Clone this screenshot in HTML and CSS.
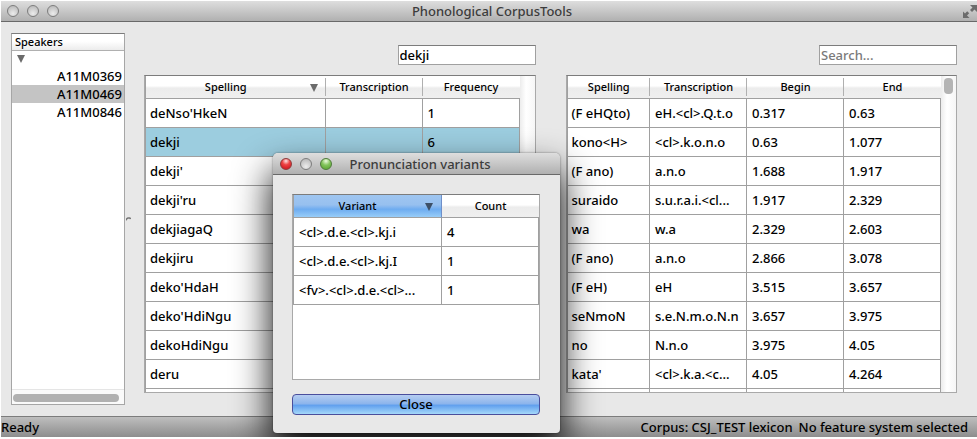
FILE: index.html
```html
<!DOCTYPE html>
<html lang="en">
<head>
<meta charset="utf-8">
<title>Phonological CorpusTools</title>
<link rel="stylesheet" href="styles.css">
</head>
<body>
<div class="window">
  <header class="titlebar">
    <div class="lights"><span class="light"></span><span class="light"></span><span class="light"></span></div>
    <h1 class="title">Phonological CorpusTools</h1>
    <svg class="expand" width="15" height="15" viewBox="0 0 15 15" aria-hidden="true">
      <path d="M8 1h7v7l-2.500-2.500-2.500 2.500-2-2 2.500-2.500z" />
      <path d="M1 14V7.500l2 2L5.200 7.300 7.200 9.300 5 11.500 7.500 14z" />
    </svg>
  </header>

  <main class="content">
    <aside class="sidebar">
      <h2 class="side-head">Speakers</h2>
      <ul class="tree">
        <li class="node"><span class="arrow"></span></li>
        <li class="node">A11M0369</li>
        <li class="node chosen">A11M0469</li>
        <li class="node">A11M0846</li>
      </ul>
      <div class="hscroll"><span class="hthumb"></span></div>
    </aside>
    <div class="splitter"><svg width="5" height="4" viewBox="0 0 5 4" aria-hidden="true"><path d="M0 3.500C0 1 4 0 4.500 2" fill="none" stroke="#777" stroke-width="1.500"/></svg></div>

    <div class="panels">
      <section class="panel">
        <input class="search" type="text" value="dekji" aria-label="Search lexicon">
        <div class="frame">
          <div class="view">
            <table class="grid">
              <colgroup><col><col class="c"><col class="c"></colgroup>
              <thead><tr><th class="sorted">Spelling<span class="arrow sort"></span></th><th>Transcription</th><th>Frequency</th></tr></thead>
              <tbody>
                <tr><td>deNso'HkeN</td><td></td><td>1</td></tr>
                <tr class="picked"><td>dekji</td><td></td><td>6</td></tr>
                <tr><td>dekji'</td><td></td><td></td></tr>
                <tr><td>dekji'ru</td><td></td><td></td></tr>
                <tr><td>dekjiagaQ</td><td></td><td></td></tr>
                <tr><td>dekjiru</td><td></td><td></td></tr>
                <tr><td>deko'HdaH</td><td></td><td></td></tr>
                <tr><td>deko'HdiNgu</td><td></td><td></td></tr>
                <tr><td>dekoHdiNgu</td><td></td><td></td></tr>
                <tr><td>deru</td><td></td><td></td></tr>
                <tr><td></td><td></td><td></td></tr>
              </tbody>
            </table>
          </div>
          <div class="vscroll"></div>
        </div>
      </section>

      <section class="panel">
        <input class="search" type="text" placeholder="Search..." aria-label="Search discourse">
        <div class="frame">
          <div class="view">
            <table class="grid">
              <colgroup><col><col class="c"><col class="c"><col class="c"></colgroup>
              <thead><tr><th>Spelling</th><th>Transcription</th><th>Begin</th><th>End</th></tr></thead>
              <tbody>
                <tr><td>(F eHQto)</td><td>eH.&lt;cl&gt;.Q.t.o</td><td>0.317</td><td>0.63</td></tr>
                <tr><td>kono&lt;H&gt;</td><td>&lt;cl&gt;.k.o.n.o</td><td>0.63</td><td>1.077</td></tr>
                <tr><td>(F ano)</td><td>a.n.o</td><td>1.688</td><td>1.917</td></tr>
                <tr><td>suraido</td><td>s.u.r.a.i.&lt;cl...</td><td>1.917</td><td>2.329</td></tr>
                <tr><td>wa</td><td>w.a</td><td>2.329</td><td>2.603</td></tr>
                <tr><td>(F ano)</td><td>a.n.o</td><td>2.866</td><td>3.078</td></tr>
                <tr><td>(F eH)</td><td>eH</td><td>3.515</td><td>3.657</td></tr>
                <tr><td>seNmoN</td><td>s.e.N.m.o.N.n</td><td>3.657</td><td>3.975</td></tr>
                <tr><td>no</td><td>N.n.o</td><td>3.975</td><td>4.05</td></tr>
                <tr><td>kata'</td><td>&lt;cl&gt;.k.a.&lt;c...</td><td>4.05</td><td>4.264</td></tr>
                <tr><td></td><td></td><td></td><td></td></tr>
              </tbody>
            </table>
          </div>
          <div class="vscroll"><span class="vthumb"></span></div>
        </div>
      </section>
    </div>
  </main>

  <footer class="status"><span>Ready</span><span class="info"><span>Corpus: CSJ_TEST lexicon</span><span>No feature system selected</span></span></footer>

  <div class="dialog" role="dialog" aria-labelledby="dialog-title">
    <header class="titlebar dialog-bar">
      <div class="lights"><span class="light red"></span><span class="light"></span><span class="light green"></span></div>
      <h2 class="title" id="dialog-title">Pronunciation variants</h2>
    </header>
    <div class="dialog-body">
      <div class="frame variants">
        <div class="view">
          <table class="grid">
            <colgroup><col><col class="c"></colgroup>
            <thead><tr><th class="sorted active">Variant<span class="arrow sort"></span></th><th>Count</th></tr></thead>
            <tbody>
              <tr><td>&lt;cl&gt;.d.e.&lt;cl&gt;.kj.i</td><td>4</td></tr>
              <tr><td>&lt;cl&gt;.d.e.&lt;cl&gt;.kj.I</td><td>1</td></tr>
              <tr><td>&lt;fv&gt;.&lt;cl&gt;.d.e.&lt;cl&gt;...</td><td>1</td></tr>
            </tbody>
          </table>
        </div>
      </div>
      <button class="close" type="button">Close</button>
    </div>
  </div>
</div>
</body>
</html>
```
FILE: styles.css
```css
* { box-sizing: border-box; }

body {
  margin: 0;
  background: #fff;
  color: #000;
  font: 500 13px/17px "Noto Sans", "Open Sans", sans-serif;
}

h1, h2, ul { margin: 0; padding: 0; list-style: none; }

.window {
  position: relative;
  display: flex;
  flex-direction: column;
  height: calc(100vh - 2px);
  padding: 1px 0 0 1px;
  overflow: hidden;
}

/* Title bars */
.titlebar {
  display: grid;
  grid-template-columns: 60px 1fr 60px;
  align-items: center;
  flex: none;
  height: 21px;
  padding: 0 0 0 6px;
  background: linear-gradient(#dedede, #b0b0b0);
  border-bottom: 1px solid #696969;
}
.title {
  color: #3c3c3c;
  font-size: 13px;
  font-weight: 500;
  line-height: 18px;
  text-align: center;
  white-space: nowrap;
}
.lights { display: flex; gap: 8px; }
.light {
  width: 12px;
  height: 12px;
  border: 1px solid #7d7d7d;
  border-radius: 50%;
  background: radial-gradient(circle at 50% 75%, #ececec, #c0c0c0 75%);
}
.red { border-color: #8d3a3a; background: radial-gradient(circle at 50% 20%, #fbd0d0 5%, #ee4444 40%, #d82228 75%); }
.green { border-color: #4e7a3a; background: radial-gradient(circle at 50% 20%, #e2f6d2 5%, #83c45c 45%, #68b040 75%); }
.expand { justify-self: end; fill: #6c6c6c; }

/* Main area */
.content {
  display: flex;
  flex: 1;
  min-height: 0;
  padding: 11px 20px 11px 10px;
  background: #e8e8e8;
}
.sidebar {
  display: flex;
  flex-direction: column;
  flex: none;
  width: 114px;
  border: 1px solid #a6a6a6;
  border-top-color: #7c7c7c;
  background: #fff;
}
.side-head {
  height: 17px;
  padding-left: 3px;
  border-bottom: 1px solid #b0b0b0;
  background: linear-gradient(#fff 45%, #ececec);
  font-size: 11px;
  font-weight: 500;
  line-height: 16px;
}
.tree { flex: 1; }
.node {
  display: flex;
  align-items: center;
  justify-content: flex-end;
  height: 18px;
  padding-right: 2px;
}
.node:first-child { justify-content: flex-start; padding-left: 5px; height: 16px; }
.chosen { background: #c4c4c4; }
.arrow {
  border: solid transparent;
  border-width: 8px 4px 0;
  border-top-color: #6b6b6b;
}
.hscroll { height: 15px; padding: 4px 5px 2px 1px; border-top: 1px solid #e5e5e5; background: #fafafa; }
.hthumb { display: block; height: 8px; border-radius: 4px; background: #b1b1b1; }
.splitter { display: flex; align-items: center; flex: none; width: 19px; padding-left: 1px; }

.panels { display: flex; flex: 1; gap: 30px; min-width: 0; padding: 12px 0; }
.panel { display: flex; flex: 1; flex-direction: column; gap: 10px; min-width: 0; }
.search {
  align-self: flex-end;
  flex: none;
  width: 138px;
  height: 20px;
  padding: 0 1px;
  border: 1px solid #a0a0a0;
  border-top-color: #7c7c7c;
  background: #fff;
  color: #000;
  font: inherit;
}
.search::placeholder { color: #7a7a7a; }

/* Table views */
.frame {
  display: flex;
  flex: 1;
  min-height: 0;
  border: 1px solid #a9a9a9;
  border-top-color: #7c7c7c;
  background: #fff;
}
.view { flex: 1; min-width: 0; overflow: hidden; }
.vscroll { flex: none; width: 15px; padding: 2px 3px; background: linear-gradient(90deg, #ececec, #fff 40%, #f6f6f6); }
.vthumb { display: block; height: 16px; border-radius: 4px; background: #b4b4b4; }

.grid { width: 100%; table-layout: fixed; border-collapse: separate; border-spacing: 0; border-left: 1px solid #a0a0a0; }
.c { width: 97px; }
.grid th {
  position: relative;
  height: 23px;
  padding: 0;
  border-bottom: 1px solid #a0a0a0;
  background:
    linear-gradient(#b0b0b0, #b0b0b0) right center / 1px 18px no-repeat,
    linear-gradient(#fff 45%, #ececec 55%, #efefef);
  font-size: 11px;
  font-weight: 500;
  line-height: 16px;
}
.grid th:last-child { background: linear-gradient(#fff 45%, #ececec 55%, #efefef); }
.grid th.sorted { padding-right: 20px; }
.grid th.active { background: linear-gradient(#9fc6f1, #97c0ef 45%, #6eacf0 65%, #98cdf8); border-right: 1px solid #6f8fc9; }
.sort { position: absolute; top: 8px; right: 8px; }
.active .sort { border-top-color: #3d4f66; }
.grid td {
  height: 29px;
  padding: 0 0 0 5px;
  border-right: 1px solid #a0a0a0;
  border-bottom: 1px solid #a0a0a0;
  white-space: nowrap;
  overflow: hidden;
}
.panel .grid td:first-child { padding-left: 4px; }
.picked td { background: #9ccddf; }

/* Status bar */
.status {
  display: flex;
  justify-content: space-between;
  align-items: center;
  flex: none;
  height: 21px;
  padding-right: 9px;
  border-top: 1px solid #7c7c7c;
  background: linear-gradient(#bebebe, #8d8d8d);
}
.info { display: flex; gap: 6px; }

/* Floating dialog */
.dialog {
  position: absolute;
  top: 153px;
  left: 273px;
  z-index: 2;
  width: 287px;
  border-radius: 5px 5px 4px 4px;
  background: #e8e8e8;
  box-shadow: 0 0 2px rgba(0, 0, 0, 0.5), 0 20px 36px 2px rgba(0, 0, 0, 0.9);
}
.dialog-bar { border-radius: 5px 5px 0 0; padding-left: 7px; height: 22px; }
.dialog-body { display: flex; flex-direction: column; gap: 14px; padding: 19px 20px 18px 19px; }
.variants { height: 186px; flex: none; }
.close {
  height: 21px;
  padding: 0;
  border: 1px solid #4a4e9c;
  border-radius: 4px;
  background: linear-gradient(#b5cdf1, #8db5ec 45%, #62a1ee 55%, #a5d8fa);
  color: #000;
  font: inherit;
}
```
